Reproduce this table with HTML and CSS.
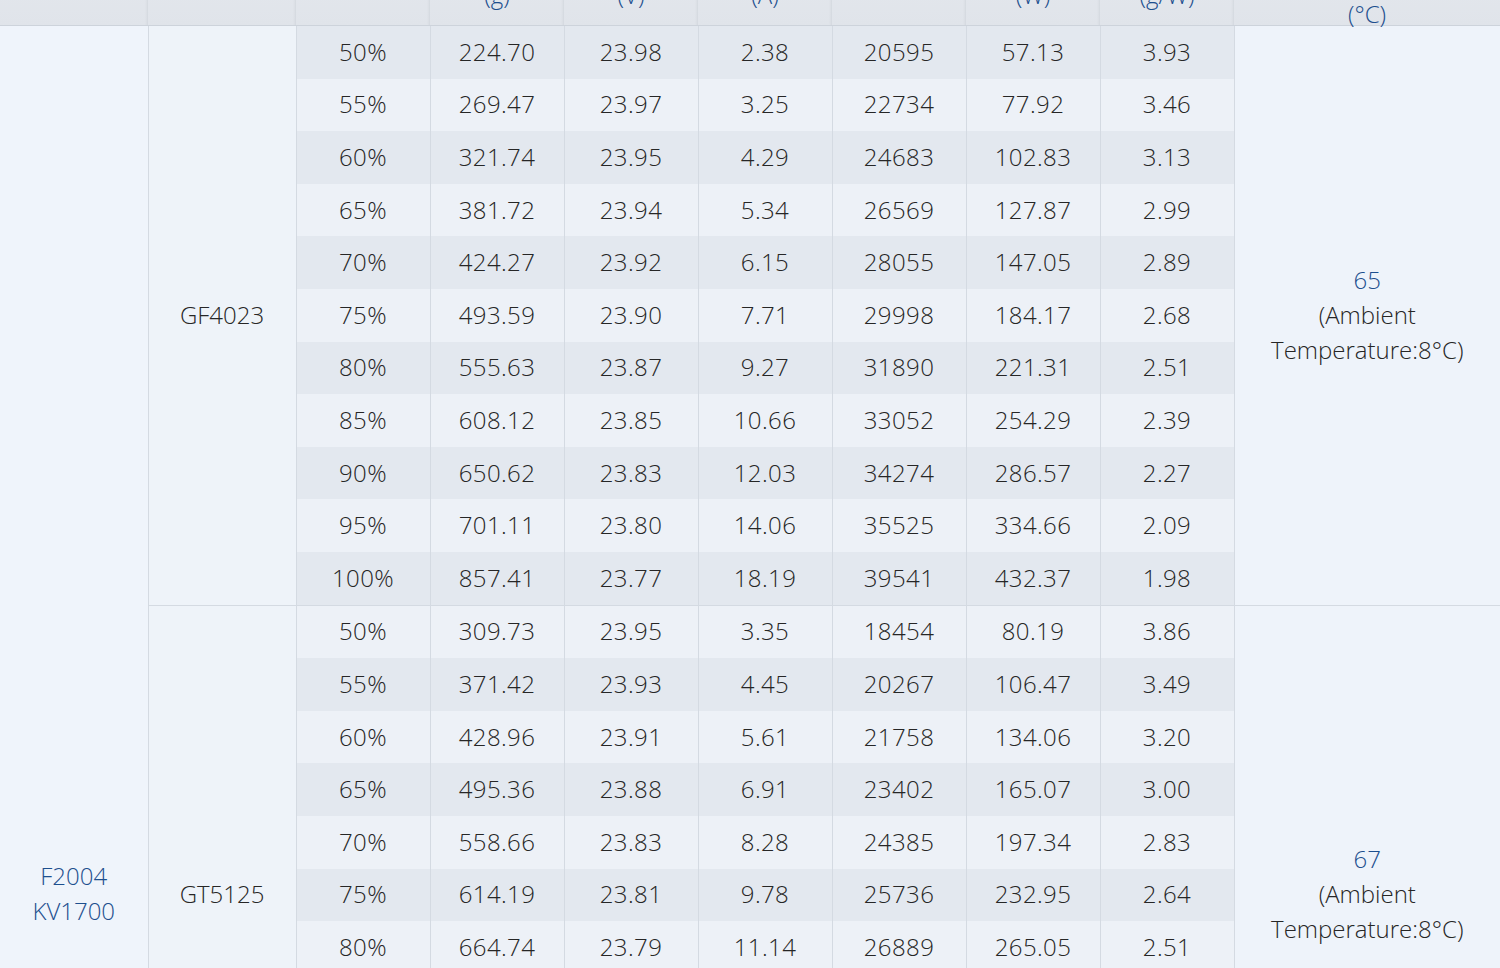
FILE: index.html
```html
<!DOCTYPE html>
<html lang="en">
<head>
<meta charset="utf-8">
<title>Motor test data</title>
<link rel="stylesheet" href="styles.css">
</head>
<body>
<div class="wrap">
<table class="data">
  <colgroup>
    <col class="c-motor"><col class="c-prop"><col class="c-num"><col class="c-num"><col class="c-num"><col class="c-num"><col class="c-num"><col class="c-num"><col class="c-num"><col class="c-temp">
  </colgroup>
  <thead>
    <tr>
      <th><span class="h-name">Motor</span><span class="h-unit">&nbsp;</span></th>
      <th><span class="h-name">Propeller</span><span class="h-unit">&nbsp;</span></th>
      <th><span class="h-name">Throttle</span><span class="h-unit">&nbsp;</span></th>
      <th><span class="h-name">Thrust</span><span class="h-unit">(g)</span></th>
      <th><span class="h-name">Voltage</span><span class="h-unit">(V)</span></th>
      <th><span class="h-name">Current</span><span class="h-unit">(A)</span></th>
      <th><span class="h-name">RPM</span><span class="h-unit">&nbsp;</span></th>
      <th><span class="h-name">Power</span><span class="h-unit">(W)</span></th>
      <th><span class="h-name">Efficiency</span><span class="h-unit">(g/W)</span></th>
      <th class="th-temp"><span class="h-name">Temperature</span><span class="h-unit">(°C)</span></th>
    </tr>
  </thead>
  <tbody>
    <tr class="dark">
      <td rowspan="22" class="motor"><span class="blue">F2004<br>KV1700</span></td>
      <td rowspan="11" class="prop">GF4023</td>
      <td>50%</td><td>224.70</td><td>23.98</td><td>2.38</td><td>20595</td><td>57.13</td><td>3.93</td>
      <td rowspan="11" class="temp"><span class="blue">65</span><br>(Ambient Temperature:8°C)</td>
    </tr>
    <tr class="light"><td>55%</td><td>269.47</td><td>23.97</td><td>3.25</td><td>22734</td><td>77.92</td><td>3.46</td></tr>
    <tr class="dark"><td>60%</td><td>321.74</td><td>23.95</td><td>4.29</td><td>24683</td><td>102.83</td><td>3.13</td></tr>
    <tr class="light"><td>65%</td><td>381.72</td><td>23.94</td><td>5.34</td><td>26569</td><td>127.87</td><td>2.99</td></tr>
    <tr class="dark"><td>70%</td><td>424.27</td><td>23.92</td><td>6.15</td><td>28055</td><td>147.05</td><td>2.89</td></tr>
    <tr class="light"><td>75%</td><td>493.59</td><td>23.90</td><td>7.71</td><td>29998</td><td>184.17</td><td>2.68</td></tr>
    <tr class="dark"><td>80%</td><td>555.63</td><td>23.87</td><td>9.27</td><td>31890</td><td>221.31</td><td>2.51</td></tr>
    <tr class="light"><td>85%</td><td>608.12</td><td>23.85</td><td>10.66</td><td>33052</td><td>254.29</td><td>2.39</td></tr>
    <tr class="dark"><td>90%</td><td>650.62</td><td>23.83</td><td>12.03</td><td>34274</td><td>286.57</td><td>2.27</td></tr>
    <tr class="light"><td>95%</td><td>701.11</td><td>23.80</td><td>14.06</td><td>35525</td><td>334.66</td><td>2.09</td></tr>
    <tr class="dark"><td>100%</td><td>857.41</td><td>23.77</td><td>18.19</td><td>39541</td><td>432.37</td><td>1.98</td></tr>

    <tr class="light group-start">
      <td rowspan="11" class="prop">GT5125</td>
      <td>50%</td><td>309.73</td><td>23.95</td><td>3.35</td><td>18454</td><td>80.19</td><td>3.86</td>
      <td rowspan="11" class="temp"><span class="blue">67</span><br>(Ambient Temperature:8°C)</td>
    </tr>
    <tr class="dark"><td>55%</td><td>371.42</td><td>23.93</td><td>4.45</td><td>20267</td><td>106.47</td><td>3.49</td></tr>
    <tr class="light"><td>60%</td><td>428.96</td><td>23.91</td><td>5.61</td><td>21758</td><td>134.06</td><td>3.20</td></tr>
    <tr class="dark"><td>65%</td><td>495.36</td><td>23.88</td><td>6.91</td><td>23402</td><td>165.07</td><td>3.00</td></tr>
    <tr class="light"><td>70%</td><td>558.66</td><td>23.83</td><td>8.28</td><td>24385</td><td>197.34</td><td>2.83</td></tr>
    <tr class="dark"><td>75%</td><td>614.19</td><td>23.81</td><td>9.78</td><td>25736</td><td>232.95</td><td>2.64</td></tr>
    <tr class="light"><td>80%</td><td>664.74</td><td>23.79</td><td>11.14</td><td>26889</td><td>265.05</td><td>2.51</td></tr>
    <tr class="dark"><td>85%</td><td></td><td></td><td></td><td></td><td></td><td></td></tr>
    <tr class="light"><td>90%</td><td></td><td></td><td></td><td></td><td></td><td></td></tr>
    <tr class="dark"><td>95%</td><td></td><td></td><td></td><td></td><td></td><td></td></tr>
    <tr class="light"><td>100%</td><td></td><td></td><td></td><td></td><td></td><td></td></tr>
  </tbody>
</table>
</div>
</body>
</html>
```

FILE: styles.css
```css
html, body {
  margin: 0;
  padding: 0;
  background: #eef3fa;
}

.wrap {
  width: 1500px;
  overflow: hidden;
}

.data {
  width: 1500px;
  table-layout: fixed;
  border-collapse: collapse;
  margin-top: -92px;
  font-family: "Open Sans", "Liberation Sans", sans-serif;
  font-weight: 300;
  font-size: 24px;
  color: #262626;
  text-align: center;
}

.c-motor { width: 148px; }
.c-prop { width: 148px; }
.c-num { width: 134px; }
.c-temp { width: 266px; }

.data thead th {
  height: 97px;
  padding: 0 4px 20px;
  vertical-align: bottom;
  line-height: 20px;
  font-weight: 300;
  color: #1d4f8e;
  background: linear-gradient(#e8ebf0, #e0e4ea);
  border: none;
  border-bottom: 1px solid #cdd3db;
  box-shadow: 0 2px 3px rgba(120, 130, 145, 0.25);
}

.data thead th.th-temp {
  padding-bottom: 1px;
}

.h-name {
  display: block;
  margin-bottom: 30px;
}

.h-unit {
  display: block;
}

.data tbody td {
  height: 50.6px;
  padding: 0 0 2px;
  line-height: 35px;
  vertical-align: middle;
  letter-spacing: 0.4px;
  border-left: 1px solid #d4dae2;
  border-right: 1px solid #d4dae2;
}

.data tbody tr.dark td { background: #e3e8ef; }
.data tbody tr.light td { background: #edf1f7; }

.data tbody tr.group-start td { border-top: 1px solid #d4dae2; }

.data tbody tr td.motor {
  background: #eff4fb;
  border-left: none;
  vertical-align: top;
  padding: 832px 0 0;
  letter-spacing: 0;
}

.data tbody tr td.prop {
  background: #eef3f9;
  letter-spacing: 0;
}

.data tbody tr td.temp {
  background: #eef3fa;
  border-right: none;
  padding: 0 20px 2px;
  letter-spacing: 0;
}

.blue {
  color: #1d4f8e;
}
```
